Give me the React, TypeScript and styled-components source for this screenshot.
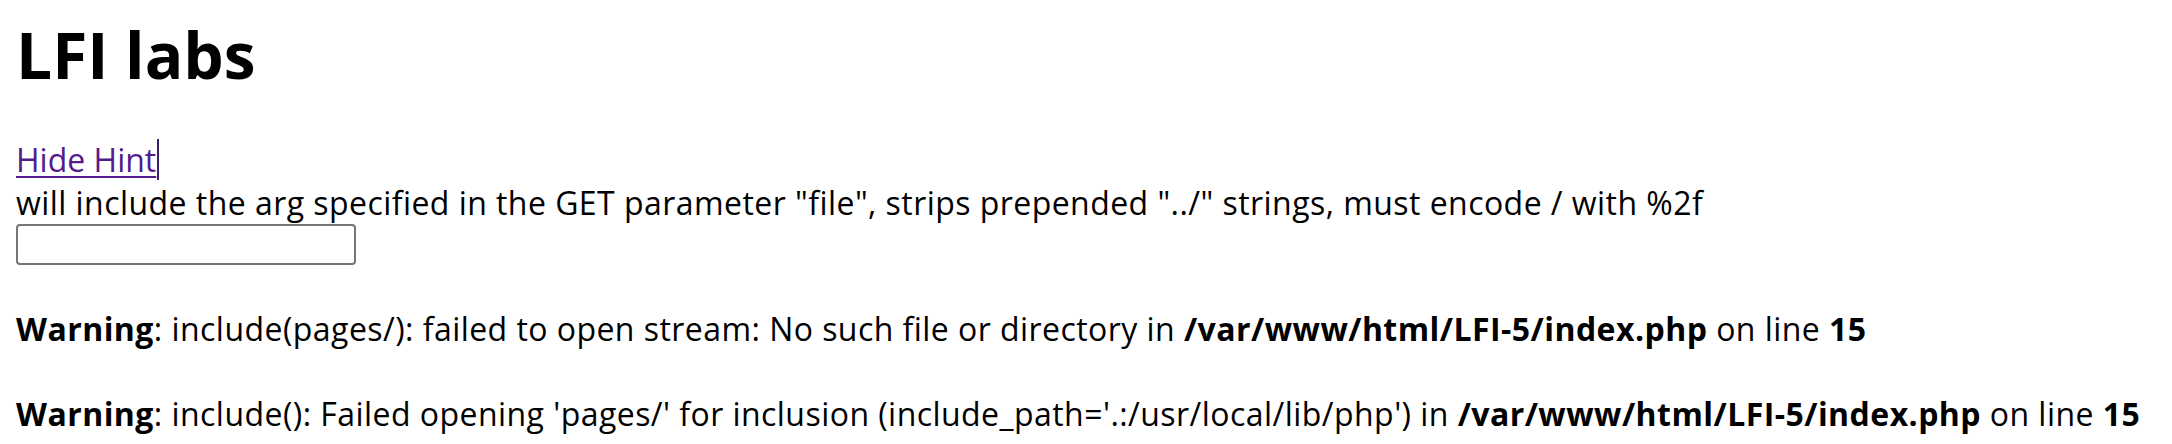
import React from "react";
import styled, { createGlobalStyle } from "styled-components";

const GlobalStyle = createGlobalStyle`
  html, body {
    margin: 0;
    background: #ffffff;
  }
  body {
    font-family: "Open Sans", "Liberation Sans", sans-serif;
    color: #000000;
  }
`;

const Page = styled.div`
  padding: 0 16px;
  font-size: 32px;
  line-height: 42.67px;
  letter-spacing: 0.45px;
`;

const Title = styled.h1`
  margin: 12px 0 42px;
  font-size: 64px;
  line-height: 85px;
  font-weight: 700;
  letter-spacing: 0;
`;

const Line = styled.div`
  white-space: nowrap;
`;

const HintLink = styled.a`
  color: #551a8b;
  text-decoration: underline;
  text-decoration-thickness: 2px;
  text-underline-offset: 4px;
  letter-spacing: 0;
  cursor: pointer;
`;

const Caret = styled.span`
  display: inline-block;
  width: 2px;
  height: 41px;
  margin-left: 1px;
  background: #3a1f6b;
  vertical-align: top;
`;

const FileInput = styled.input`
  display: block;
  box-sizing: border-box;
  width: 340px;
  height: 41px;
  margin: 0 0 2px;
  padding: 1px 4px;
  border: 2px solid #767676;
  border-radius: 4px;
  font: inherit;
  font-size: 26px;
  background: #ffffff;
`;

const Warning = styled.div`
  margin-top: 42.67px;
  white-space: nowrap;
`;

export default function App() {
  return (
    <>
      <GlobalStyle />
      <Page>
        <Title>LFI labs</Title>
        <Line>
          <HintLink>Hide Hint</HintLink>
          <Caret />
        </Line>
        <Line>
          will include the arg specified in the GET parameter "file", strips prepended "../" strings, must encode / with
          %2f
        </Line>
        <FileInput type="text" />
        <Warning>
          <b>Warning</b>: include(pages/): failed to open stream: No such file or directory in{" "}
          <b>/var/www/html/LFI-5/index.php</b> on line <b>15</b>
        </Warning>
        <Warning>
          <b>Warning</b>: include(): Failed opening 'pages/' for inclusion (include_path='.:/usr/local/lib/php') in{" "}
          <b>/var/www/html/LFI-5/index.php</b> on line <b>15</b>
        </Warning>
      </Page>
    </>
  );
}
